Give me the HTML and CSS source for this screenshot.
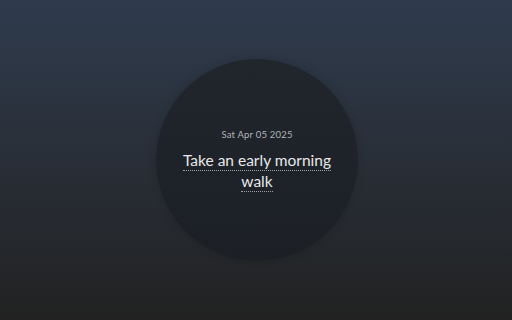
FILE: index.html
```html
<!DOCTYPE html>
<html>
<head>
<meta charset="utf-8">
<link rel="stylesheet" href="styles.css">
</head>
<body>
<main class="page">
  <section class="circle">
    <div class="date">Sat Apr 05 2025</div>
    <div class="task"><span class="task-text">Take an early morning walk</span></div>
  </section>
</main>
</body>
</html>
```
FILE: styles.css
```css
html, body {
  margin: 0;
  padding: 0;
  width: 512px;
  height: 320px;
  overflow: hidden;
}
body {
  background: linear-gradient(to bottom, #2f3b4d 0%, #222222 100%);
  font-family: "Lato", "Noto Sans", sans-serif;
}
.page {
  width: 512px;
  height: 320px;
  display: flex;
  align-items: center;
  justify-content: center;
}
.circle {
  width: 202px;
  height: 202px;
  border-radius: 50%;
  background: linear-gradient(to bottom, #21262d 0%, #1c2025 100%);
  box-shadow: 0 0 10px rgba(0,0,0,0.15);
  display: flex;
  flex-direction: column;
  align-items: center;
  justify-content: center;
  box-sizing: border-box;
  padding: 0 20px 0;
  margin-left: 2px;
}
.date {
  font-size: 9.5px;
  font-weight: 400;
  letter-spacing: 0.2px;
  color: #b0b3b8;
  margin-bottom: 10px;
}
.task {
  font-size: 15.5px;
  font-weight: 400;
  line-height: 21px;
  color: #e6e8ea;
  text-align: center;
  width: 160px;
}
.task-text {
  border-bottom: 1px dotted #9aa0a6;
  padding-bottom: 1px;
}
```
